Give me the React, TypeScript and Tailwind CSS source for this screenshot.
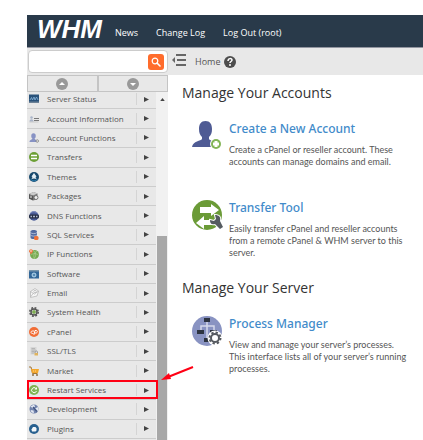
import type { ReactNode } from "react";

interface MenuItem {
  name: string;
  icon: ReactNode;
  highlighted?: boolean;
}

interface Tool {
  name: string;
  description: string;
  icon: ReactNode;
}

const menuItems: MenuItem[] = [
  {
    name: "Server Status",
    icon: (
      <>
        <rect x="0" y="1" width="20" height="17" fill="#29527a" />
        <rect x="0" y="15" width="20" height="3" fill="#6d8297" />
        <path d="M2 12l3-5 2 5 3-6 2 6 3-6 3 6" fill="none" stroke="#8db9df" strokeWidth="1.5" />
      </>
    ),
  },
  {
    name: "Account Information",
    icon: (
      <>
        <circle cx="5" cy="7" r="2.5" fill="#a9b4c9" />
        <path d="M1 15c0-6 8-6 8 0z" fill="#a9b4c9" />
        <path d="M10 9h10M10 13h10" stroke="#777" strokeWidth="2" />
        <path d="M1 16h18" stroke="#aaa" strokeWidth="1" />
      </>
    ),
  },
  {
    name: "Account Functions",
    icon: (
      <>
        <ellipse cx="9" cy="6" rx="4.5" ry="5.5" fill="#8792c4" />
        <path d="M1 18c0-5 6-4 6-8h4c0 4 5 3 5 8z" fill="#8792c4" />
        <circle cx="16.5" cy="16" r="2.5" fill="#eee" stroke="#777" strokeWidth="1.5" />
      </>
    ),
  },
  {
    name: "Transfers",
    icon: (
      <>
        <circle cx="10" cy="10" r="10" fill="#6c9f35" />
        <path d="M4 7h12M4 13h12" stroke="#fff" strokeWidth="3" />
      </>
    ),
  },
  {
    name: "Themes",
    icon: (
      <>
        <circle cx="10" cy="10" r="10" fill="#17486c" />
        <path d="M10 2l5 7-2 1 2 4-5-1-5 1 2-4-2-1z" fill="#e4eef5" />
        <path d="M3 14c4 5 10 5 14 0" fill="none" stroke="#2e83b5" strokeWidth="2" />
      </>
    ),
  },
  {
    name: "Packages",
    icon: (
      <>
        <path d="M0 6l9-4 8 3v11l-8 3-9-4z" fill="#777" />
        <path d="M0 6l8 3v10l-8-4z" fill="#555" />
        <path d="M0 6l9-4 8 3-9 4z" fill="#ccc" />
        <circle cx="14" cy="13" r="4" fill="#eee" stroke="#777" strokeWidth="2" />
        <path d="M4 9v5" stroke="#eee" strokeWidth="2" />
      </>
    ),
  },
  {
    name: "DNS Functions",
    icon: (
      <>
        <circle cx="10" cy="10" r="9.5" fill="#4a5b96" />
        <path d="M3 4c4-4 11-3 14 1" fill="none" stroke="#8190c4" strokeWidth="2" />
        <rect x="0" y="7" width="20" height="8" rx="3" fill="#252d43" />
        <path d="M3 11h3M8 11h4M14 11h3" stroke="#aeb7cf" strokeWidth="3" />
      </>
    ),
  },
  {
    name: "SQL Services",
    icon: (
      <>
        <path d="M3 3c0-4 13-4 13 0v12c0 4-13 4-13 0z" fill="#526aa0" />
        <path d="M3 5c2 3 11 3 13 0M3 10c2 3 11 3 13 0" fill="none" stroke="#c5cfe5" strokeWidth="1.5" />
        <rect x="10" y="12" width="9" height="8" rx="3" fill="#ee7138" />
      </>
    ),
  },
  {
    name: "IP Functions",
    icon: (
      <>
        <circle cx="11" cy="11" r="9" fill="#75a950" />
        <path d="M8 3c7 3 7 13 1 17M3 12c6-4 12-3 16 0M16 4c-6 3-8 10-5 16" fill="none" stroke="#bedaa4" strokeWidth="1" />
        <path d="M4 11L0 5c0-6 8-6 8 0z" fill="#ec7944" />
        <circle cx="4" cy="4" r="1.5" fill="#fff" />
      </>
    ),
  },
  {
    name: "Software",
    icon: (
      <>
        <rect x="0" y="2" width="20" height="17" fill="#326799" />
        <path d="M0 2h20v3H0z" fill="#7895ab" />
        <circle cx="10" cy="12" r="4" fill="#78afd7" stroke="#cae1f2" strokeWidth="1.5" />
        <circle cx="10" cy="12" r="1.5" fill="#24557f" />
      </>
    ),
  },
  {
    name: "Email",
    icon: (
      <>
        <path d="M3 7l9-6 7 5-3 10-13 3z" fill="#f7f7f7" stroke="#b5b5b5" strokeWidth="1.5" />
        <path d="M3 7l8 5 8-6M3 18l6-8" fill="none" stroke="#b5b5b5" strokeWidth="1.5" />
        <circle cx="12" cy="7" r="2.5" fill="none" stroke="#999" strokeWidth="1" />
      </>
    ),
  },
  {
    name: "System Health",
    icon: (
      <>
        <circle cx="10" cy="10" r="8.5" fill="none" stroke="#555" strokeWidth="3" strokeDasharray="3.7 3" />
        <circle cx="10" cy="10" r="6" fill="#eee" stroke="#555" strokeWidth="3" />
        <path d="M10 6v8M6 10h8" stroke="#79ab49" strokeWidth="3" />
      </>
    ),
  },
  {
    name: "cPanel",
    icon: (
      <>
        <circle cx="10" cy="10" r="10" fill="#f16d36" />
        <path d="M9 8H7c-4 0-4 5 0 5h1M10 15l2-8h2c4 0 3 5 0 5h-2" fill="none" stroke="#fff" strokeWidth="2" strokeLinecap="round" />
      </>
    ),
  },
  {
    name: "SSL/TLS",
    icon: (
      <>
        <path d="M3 2h12v15H3z" fill="#d6d6d6" />
        <path d="M5 5h7M5 8h8M5 11h6M5 14h5" stroke="#aaa" strokeWidth="1.5" />
        <path d="M12 14v-2c0-3 5-3 5 0v2" fill="none" stroke="#888" strokeWidth="1.5" />
        <rect x="11" y="14" width="7" height="5" fill="#dfb35e" />
      </>
    ),
  },
  {
    name: "Market",
    icon: (
      <>
        <path d="M0 2h4l3 13h10" fill="none" stroke="#a47635" strokeWidth="2" />
        <path d="M4 6h16l-2 8H6z" fill="#f3a72d" />
        <path d="M9 8v4M13 8v4" stroke="#fbd58e" strokeWidth="1" />
        <circle cx="8" cy="18" r="2" fill="#8b6c41" />
        <circle cx="16" cy="18" r="2" fill="#8b6c41" />
      </>
    ),
  },
  {
    name: "Restart Services",
    highlighted: true,
    icon: (
      <>
        <circle cx="10" cy="10" r="10" fill="#7fb450" />
        <path d="M14 7a5 5 0 1 0 1 5" fill="none" stroke="#fff" strokeWidth="2" />
        <path d="M16 4v5h-5z" fill="#fff" />
      </>
    ),
  },
  {
    name: "Development",
    icon: (
      <>
        <circle cx="10" cy="10" r="9" fill="#7283ad" />
        <path d="M3 5l7-4 2 4-4 4zM12 9l6-3 1 7-4 2zM3 12l6 1 1 5-5-1z" fill="#e3e8f2" />
        <path d="M8 6l8 9" stroke="#425583" strokeWidth="3" />
      </>
    ),
  },
  {
    name: "Plugins",
    icon: (
      <>
        <circle cx="10" cy="10" r="10" fill="#28608f" />
        <path d="M8 6h5l2 3v4l-2 2H6l-1-4z" fill="#f3f7fa" />
      </>
    ),
  },
];

const accountTools: Tool[] = [
  {
    name: "Create a New Account",
    description:
      "Create a cPanel or reseller account. These accounts can manage domains and email.",
    icon: (
      <>
        <path d="M7 8C7 3 9 0 13.5 0S20 3 20 8c0 4-1 6-3 8v2c1 2 7 2 8 8H0c1-6 9-6 10-8v-2C8 14 7 12 7 8z" fill="#4f5b94" />
        <circle cx="24" cy="23" r="6" fill="#fff" />
        <circle cx="24" cy="23" r="5" fill="#83b557" />
        <path d="M24 20v6M21 23h6" stroke="#fff" strokeWidth="3" />
      </>
    ),
  },
  {
    name: "Transfer Tool",
    description:
      "Easily transfer cPanel and reseller accounts from a remote cPanel & WHM server to this server.",
    icon: (
      <>
        <circle cx="15" cy="15" r="15" fill="#6b9b37" />
        <path d="M8 7h11V4l8 6-8 6v-3H8zM20 20h-8v-4l-8 7 8 6v-4h8z" fill="#fff" />
        <path d="M18 20l4 1 2-2-1-4c4 0 6 2 5 6l3 6-3 2-5-5c-4 1-5-1-5-4z" fill="#555b60" stroke="#fff" strokeWidth="2" paintOrder="stroke" />
      </>
    ),
  },
];

const serverTools: Tool[] = [
  {
    name: "Process Manager",
    description:
      "View and manage your server’s processes. This interface lists all of your server’s running processes.",
    icon: (
      <>
        <circle cx="15" cy="15" r="15" fill="#8993c2" />
        <path d="M15 4v20M9 15v-5h13v5" fill="none" stroke="#d5d9ea" strokeWidth="1.5" />
        <path d="M12 2h6v4h-6zM5 14h7v4H5zM18 14h7v4h-7zM12 22h6v4h-6z" fill="#2d3441" />
        <circle cx="23" cy="22" r="7.5" fill="#fff" />
        <circle cx="23" cy="22" r="5.5" fill="none" stroke="#565a60" strokeWidth="2" strokeDasharray="2.3 2" />
        <circle cx="23" cy="22" r="4" fill="#fff" stroke="#565a60" strokeWidth="2" />
      </>
    ),
  },
];

function ToolSection({ title, tools }: { title: string; tools: Tool[] }) {
  return (
    <section>
      <h2 className="text-[14px] leading-5 text-[#333]">{title}</h2>
      <div className="mt-[18px] flex flex-col gap-8 pl-[10px]">
        {tools.map((tool) => (
          <article key={tool.name} className="flex gap-[7px]">
            <svg viewBox="0 0 30 30" className="size-[30px] shrink-0 overflow-visible" aria-hidden="true">
              {tool.icon}
            </svg>
            <div>
              <h3 className="font-['Noto_Sans',sans-serif] text-[12px] leading-4 font-medium text-[#428bca]">
                <a href="#">{tool.name}</a>
              </h3>
              <p className="mt-[7px] max-w-[182px] font-['Lato',sans-serif] text-[9px] leading-3 text-[#555]">
                {tool.description}
              </p>
            </div>
          </article>
        ))}
      </div>
    </section>
  );
}

function ScrollButton({ label, down }: { label: string; down?: boolean }) {
  return (
    <button
      type="button"
      aria-label={label}
      className="flex flex-1 items-center justify-center border border-[#c4c4c4] bg-[#e8e8e8]"
    >
      <svg viewBox="0 0 12 12" className="size-3" aria-hidden="true">
        <circle cx="6" cy="6" r="6" fill="#999" />
        <path d={down ? "M3 5h6L6 8z" : "M3 7h6L6 4z"} fill="#fff" />
      </svg>
    </button>
  );
}

export default function App() {
  return (
    <div className="flex h-screen flex-col overflow-hidden bg-white pt-[15px] pl-[27px] font-['Open_Sans',sans-serif]">
      {/* Top bar */}
      <header className="flex h-[33px] shrink-0 items-center border-b border-[#9295a0] bg-[#293a4a] pl-[10px] text-[9px] text-white">
        <a
          href="#"
          className="w-[78px] pb-1 font-['Liberation_Sans',sans-serif] text-[26px] leading-6 font-bold italic"
        >
          WHM
        </a>
        <nav className="flex gap-[18px] pt-1">
          <a href="#">News</a>
          <a href="#">Change Log</a>
          <a href="#">Log Out (root)</a>
        </nav>
      </header>

      {/* Search and breadcrumb */}
      <div className="flex h-[27px] shrink-0 items-center bg-[#e8e8e8]">
        <form className="ml-px flex h-[23px] w-[140px] items-center rounded-sm border border-[#ccc] bg-white pr-[3px]">
          <input
            type="text"
            aria-label="Search"
            className="min-w-0 flex-1 px-1 text-[9px] outline-none"
          />
          <button
            type="button"
            aria-label="Find"
            className="flex size-4 items-center justify-center rounded-[3px] bg-[#ff6c2c]"
          >
            <svg viewBox="0 0 10 10" className="size-[10px]" fill="none" stroke="#fff" aria-hidden="true">
              <circle cx="4" cy="4" r="2.8" strokeWidth="1.2" />
              <path d="M6 6l3 3" strokeWidth="1.6" strokeLinecap="round" />
            </svg>
          </button>
        </form>
        <button type="button" aria-label="Collapse menu" className="ml-1 pb-1">
          <svg viewBox="0 0 14 12" className="h-3 w-[14px]" aria-hidden="true">
            <path d="M4 1h10M5 6h9M4 11h10" stroke="#666" strokeWidth="2" />
            <path d="M0 6l3-3v6z" fill="#666" />
          </svg>
        </button>
        <a href="#" className="ml-[9px] text-[9px] text-[#555]">
          Home
        </a>
        <button type="button" aria-label="Help" className="ml-1">
          <svg viewBox="0 0 12 12" className="size-3" fill="none" aria-hidden="true">
            <circle cx="6" cy="6" r="6" fill="#4d4d4d" />
            <path d="M4 5c0-3 4-3 4-1 0 1.5-2 1.5-2 3" stroke="#fff" strokeWidth="1.5" />
            <circle cx="6" cy="9" r="1" fill="#fff" />
          </svg>
        </button>
      </div>

      <div className="flex min-h-0 flex-1">
        {/* Sidebar */}
        <aside className="flex w-[141px] shrink-0 flex-col">
          <div className="relative flex h-[17px] shrink-0">
            <ScrollButton label="Scroll up" />
            <ScrollButton label="Scroll down" down />
          </div>
          <div className="flex min-h-0 flex-1">
            <ul className="-mt-0.5 flex flex-1 flex-col bg-[#e8e8e8] pb-px">
              {menuItems.map((item) => (
                <li
                  key={item.name}
                  className="relative flex min-h-0 flex-1 items-center border-b border-[#ccc] pl-0.5"
                >
                  <svg viewBox="0 0 20 20" className="size-[10px] shrink-0" aria-hidden="true">
                    {item.icon}
                  </svg>
                  <a href="#" className="ml-2 flex-1 text-[8px] leading-3 text-[#555]">
                    {item.name}
                  </a>
                  <span className="flex h-3 w-5 items-center justify-center border-l border-[#d4d4d4]">
                    <svg viewBox="0 0 6 6" className="size-[5px]" aria-hidden="true">
                      <path d="M0 0l6 3-6 3z" fill="#444" />
                    </svg>
                  </span>
                  {item.highlighted && (
                    <>
                      <div className="absolute -top-px -right-0.5 bottom-0 left-0 border-2 border-[#ff0014]" />
                      <svg
                        viewBox="0 0 34 16"
                        className="absolute bottom-full left-full z-10 ml-1 h-4 w-[34px]"
                        aria-hidden="true"
                      >
                        <path d="M33 2L8 12" stroke="#ff0014" strokeWidth="2" />
                        <path d="M1 15l8-7 2 6z" fill="#ff0014" />
                      </svg>
                    </>
                  )}
                </li>
              ))}
            </ul>
            <div className="flex w-3 flex-col items-center bg-[#f1f1f1]">
              <svg viewBox="0 0 6 4" className="mt-[6px] h-[3px] w-[5px] shrink-0" aria-hidden="true">
                <path d="M0 4l3-4 3 4z" fill="#444" />
              </svg>
              <div className="mt-[135px] w-[10px] flex-1 bg-[#a8a8a8]" />
            </div>
          </div>
        </aside>

        {/* Content */}
        <main className="flex min-w-0 flex-1 flex-col gap-[19px] pt-2 pl-[14px]">
          <ToolSection title="Manage Your Accounts" tools={accountTools} />
          <ToolSection title="Manage Your Server" tools={serverTools} />
        </main>
      </div>
    </div>
  );
}
